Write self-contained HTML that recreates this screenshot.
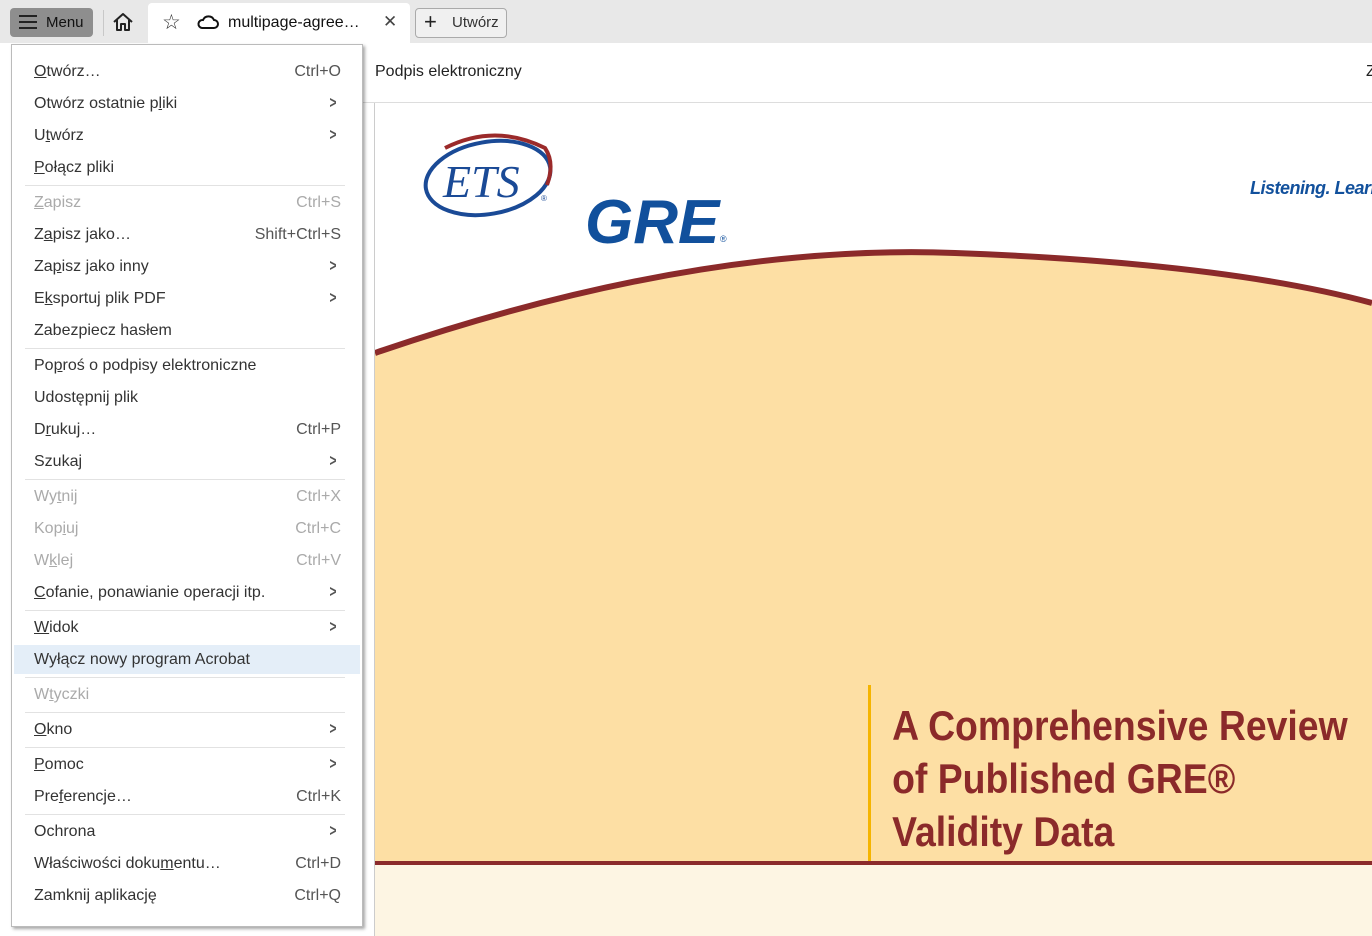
<!DOCTYPE html>
<html><head><meta charset="utf-8"><style>
body{margin:0;width:1372px;height:936px;overflow:hidden;background:#fff;font-family:"Liberation Sans",Arial,sans-serif;position:relative}
.top{position:absolute;left:0;top:0;width:1372px;height:43px;background:#e8e8e8}
.abs{position:absolute}
.menu{position:absolute;left:11px;top:44px;width:350px;height:881px;background:#fff;border:1px solid #bbb;box-shadow:2px 2px 3px rgba(0,0,0,.35)}
.it{position:absolute;left:22px;font-size:16px;color:#333;line-height:20px;white-space:nowrap;margin-top:1px}
.sc{position:absolute;right:21px;font-size:16px;color:#555;line-height:20px;margin-top:1px}
.ar{position:absolute;right:24px;font-size:17px;color:#555;line-height:20px;transform:scaleX(.7);font-weight:bold}
.dis{color:#aaa!important}
.sep{position:absolute;left:13px;width:320px;height:1px;background:#e2e2e2}
u{text-decoration:underline}
</style></head><body>
<div class="top"></div>
<div class="abs" style="left:10px;top:8px;width:83px;height:29px;background:#8e8e8e;border-radius:4px"></div>
<svg class="abs" style="left:18px;top:14px" width="20" height="16"><path d="M1 2H19M1 8H19M1 14H19" stroke="#222" stroke-width="2"/></svg>
<div class="abs" style="left:46px;top:14px;font-size:15px;color:#111">Menu</div>
<div class="abs" style="left:103px;top:10px;width:1px;height:26px;background:#c8c8c8"></div>
<svg class="abs" style="left:112px;top:12px" width="22" height="20"><path d="M2 10L11 2L20 10M5 8V18H9V12H13V18H17V8" fill="none" stroke="#222" stroke-width="2" stroke-linejoin="round"/></svg>
<div class="abs" style="left:148px;top:3px;width:262px;height:40px;background:#fff;border-radius:4px 4px 0 0"></div>
<div class="abs" style="left:162px;top:10px;font-size:21px;color:#333">☆</div>
<svg class="abs" style="left:197px;top:14px" width="22" height="16"><path d="M5 14H17A4 4 0 0 0 17 6A6 6 0 0 0 6 6A4 4 0 0 0 5 14Z" fill="none" stroke="#111" stroke-width="2"/></svg>
<div class="abs" style="left:228px;top:14px;font-size:16px;color:#111">multipage-agree…</div>
<div class="abs" style="left:383px;top:12px;font-size:17px;color:#444">✕</div>
<div class="abs" style="left:415px;top:8px;width:90px;height:28px;border:1px solid #aaa;border-radius:4px;background:#f0f0f0"></div>
<div class="abs" style="left:424px;top:9px;font-size:22px;color:#222">+</div>
<div class="abs" style="left:452px;top:14px;font-size:15px;color:#333">Utwórz</div>

<div class="abs" style="left:362px;top:102px;width:1010px;height:1px;background:#ddd"></div>
<div class="abs" style="left:375px;top:63px;font-size:16px;color:#222">Podpis elektroniczny</div>
<div class="abs" style="left:1366px;top:63px;font-size:16px;color:#222">Z</div>
<div class="abs" style="left:374px;top:103px;width:1px;height:833px;background:#ccc"></div>

<svg class="abs" style="left:375px;top:103px" width="997" height="833">
<path d="M0 250 Q 320 140 580 150 Q 850 160 997 200 L997 760 L0 760Z" fill="#fddfa4"/>
<path d="M0 250 Q 320 140 580 150 Q 850 160 997 200" fill="none" stroke="#8b2a2a" stroke-width="6"/>
<rect x="0" y="760" width="997" height="73" fill="#fdf5e3"/>
<rect x="0" y="758" width="997" height="4" fill="#8b2a2a"/>
<rect x="493" y="582" width="3" height="176" fill="#f5b400"/>
<ellipse cx="113" cy="75" rx="63" ry="36" fill="none" stroke="#1a4a96" stroke-width="4" transform="rotate(-10 113 75)"/>
<path d="M70 45 Q120 20 170 45 Q180 60 172 82" fill="none" stroke="#9b2a2a" stroke-width="4"/>
<text x="68" y="94" font-family="Liberation Serif" font-style="italic" font-size="46" fill="#1a4a96">ETS</text>
<text x="166" y="98" font-size="8" fill="#1a4a96">®</text>
<text x="210" y="140" font-family="Liberation Sans" font-style="italic" font-weight="bold" font-size="62" fill="#11509c" letter-spacing="0">GRE</text>
<text x="345" y="139" font-size="9" fill="#11509c">®</text>
<text x="875" y="91" font-style="italic" font-weight="bold" font-size="18" fill="#11509c" letter-spacing="-0.5">Listening. Learn</text>
<g font-family="Liberation Sans" font-weight="bold" font-size="42" fill="#8b2a2a" transform="scale(0.89,1)">
<text x="581" y="637">A Comprehensive Review</text>
<text x="581" y="690">of Published GRE®</text>
<text x="581" y="743">Validity Data</text></g>
</svg>

<div class="menu">
<div class="it" style="top:16px"><u>O</u>twórz…</div><div class="sc" style="top:16px">Ctrl+O</div>
<div class="it" style="top:48px">Otwórz ostatnie p<u>l</u>iki</div><div class="ar" style="top:48px">&gt;</div>
<div class="it" style="top:80px">U<u>t</u>wórz</div><div class="ar" style="top:80px">&gt;</div>
<div class="it" style="top:112px"><u>P</u>ołącz pliki</div>
<div class="sep" style="top:140px"></div>
<div class="it dis" style="top:147px"><u>Z</u>apisz</div><div class="sc dis" style="top:147px">Ctrl+S</div>
<div class="it" style="top:179px">Z<u>a</u>pisz jako…</div><div class="sc" style="top:179px">Shift+Ctrl+S</div>
<div class="it" style="top:211px">Za<u>p</u>isz jako inny</div><div class="ar" style="top:211px">&gt;</div>
<div class="it" style="top:243px">E<u>k</u>sportuj plik PDF</div><div class="ar" style="top:243px">&gt;</div>
<div class="it" style="top:275px">Zabezpiecz hasłem</div>
<div class="sep" style="top:303px"></div>
<div class="it" style="top:310px">Po<u>p</u>roś o podpisy elektroniczne</div>
<div class="it" style="top:342px">Udostępnij plik</div>
<div class="it" style="top:374px">D<u>r</u>ukuj…</div><div class="sc" style="top:374px">Ctrl+P</div>
<div class="it" style="top:406px">Szukaj</div><div class="ar" style="top:406px">&gt;</div>
<div class="sep" style="top:434px"></div>
<div class="it dis" style="top:441px">Wy<u>t</u>nij</div><div class="sc dis" style="top:441px">Ctrl+X</div>
<div class="it dis" style="top:473px">Kop<u>i</u>uj</div><div class="sc dis" style="top:473px">Ctrl+C</div>
<div class="it dis" style="top:505px">W<u>k</u>lej</div><div class="sc dis" style="top:505px">Ctrl+V</div>
<div class="it" style="top:537px"><u>C</u>ofanie, ponawianie operacji itp.</div><div class="ar" style="top:537px">&gt;</div>
<div class="sep" style="top:565px"></div>
<div class="it" style="top:572px"><u>W</u>idok</div><div class="ar" style="top:572px">&gt;</div>
<div class="abs" style="left:2px;top:600px;width:346px;height:29px;background:#e4eef8"></div>
<div class="it" style="top:604px">Wyłącz nowy program Acrobat</div>
<div class="sep" style="top:632px"></div>
<div class="it dis" style="top:639px">W<u>t</u>yczki</div>
<div class="sep" style="top:667px"></div>
<div class="it" style="top:674px"><u>O</u>kno</div><div class="ar" style="top:674px">&gt;</div>
<div class="sep" style="top:702px"></div>
<div class="it" style="top:709px"><u>P</u>omoc</div><div class="ar" style="top:709px">&gt;</div>
<div class="it" style="top:741px">Pre<u>f</u>erencje…</div><div class="sc" style="top:741px">Ctrl+K</div>
<div class="sep" style="top:769px"></div>
<div class="it" style="top:776px">Ochrona</div><div class="ar" style="top:776px">&gt;</div>
<div class="it" style="top:808px">Właściwości doku<u>m</u>entu…</div><div class="sc" style="top:808px">Ctrl+D</div>
<div class="it" style="top:840px">Zamknij aplikac<u>j</u>ę</div><div class="sc" style="top:840px">Ctrl+Q</div>
</div>
</body></html>
